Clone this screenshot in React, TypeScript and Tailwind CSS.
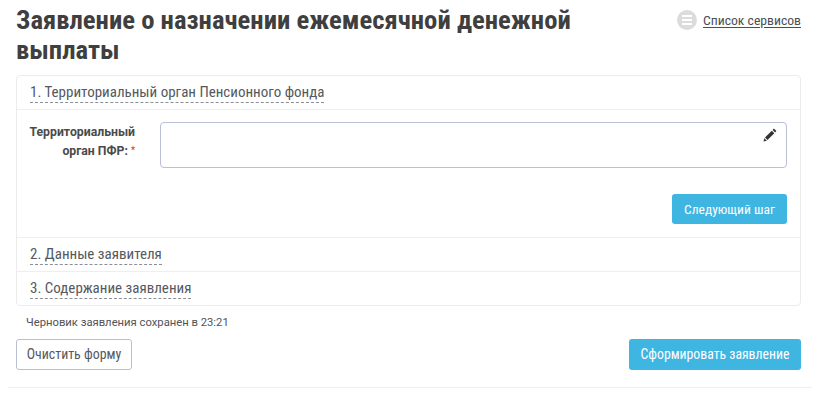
import React from "react";

const Step = ({ children, last = false }: { children: React.ReactNode; last?: boolean }) => (
  <div className={`pl-[13px] pt-[4px] ${last ? "h-[33px]" : "h-[34px] border-b border-[#eeeeee]"}`}>
    <span className="inline-block h-[21px] border-b border-dashed border-[#8a8f96] font-['Roboto',sans-serif] text-[15px] leading-[21px] text-[#55595f] [font-stretch:80%]">
      {children}
    </span>
  </div>
);

export default function App() {
  return (
    <div className="relative h-[402px] w-[820px] overflow-hidden bg-white font-['Roboto',sans-serif] [font-stretch:92%]">
      <div className="pl-4 pr-[19px]">
        <div className="flex h-[75px] items-start justify-between">
          <h1 className="mt-[5px] w-[600px] text-[26.7px] font-bold leading-[30px] text-[#3f3f3f] [font-stretch:79%]">
            Заявление о назначении ежемесячной денежной выплаты
          </h1>
          <a className="mt-[9px] flex items-center gap-[6px] text-[13.7px] leading-[22px] text-[#4a4f55] [font-stretch:85%]">
            <span className="flex h-5 w-5 flex-col items-center justify-center gap-[2px] rounded-full bg-[#dcdcdc]">
              <i className="block h-[2px] w-[10px] bg-white" />
              <i className="block h-[2px] w-[10px] bg-white" />
              <i className="block h-[2px] w-[10px] bg-white" />
            </span>
            <span className="underline underline-offset-2">Список сервисов</span>
          </a>
        </div>

        <div className="rounded-[4px] border border-[#ececec]">
          <Step>1. Территориальный орган Пенсионного фонда</Step>
          <div className="h-[128px] border-b border-[#eeeeee] pr-[13px] pt-[12px]">
            <div className="flex">
              <label className="w-[118px] pt-[1px] text-right text-[12.25px] font-bold leading-[19px] text-[#4a4a4a] [font-stretch:100%]">
                Территориальный<br />орган ПФР: <span className="relative top-[-2px] text-[9px] text-[#e03c3c]">*</span>
              </label>
              <div className="relative ml-[25px] h-[46px] flex-1 rounded-[4px] border border-[#b9bfd6]">
                <svg className="absolute right-[9px] top-[5px] h-[14px] w-[14px]" viewBox="0 0 14 14" fill="#333333">
                  <path d="M0.5 13.5 1.3 10.2 3.8 12.7Z" />
                  <path d="M2 9.5 8.8 2.7 11.3 5.2 4.5 12Z" />
                  <path d="M9.6 1.9 10.9 0.6 13.4 3.1 12.1 4.4Z" />
                </svg>
              </div>
            </div>
            <div className="mt-[26px] flex justify-end">
              <button className="h-[30px] w-[115px] rounded-[3px] bg-[#3fb5e2] text-[13.5px] text-white [font-stretch:82%]">Следующий шаг</button>
            </div>
          </div>
          <Step>2. Данные заявителя</Step>
          <Step last>3. Содержание заявления</Step>
        </div>

        <div className="mt-[9px] pl-[10px] text-[11.25px] leading-[16px] text-[#4f5358]">Черновик заявления сохранен в 23:21</div>

        <div className="mt-[8px] flex justify-between">
          <button className="h-[31px] w-[116px] rounded-[3px] border border-[#b9bfd0] bg-white text-[13.9px] text-[#55595f] [font-stretch:85%]">Очистить форму</button>
          <button className="h-[31px] w-[172px] rounded-[3px] bg-[#3fb5e2] text-[13.75px] text-white [font-stretch:82%]">Сформировать заявление</button>
        </div>
      </div>
      <div className="ml-2 mr-2 mt-[17px] border-t border-[#eeeeee]" />
    </div>
  );
}
